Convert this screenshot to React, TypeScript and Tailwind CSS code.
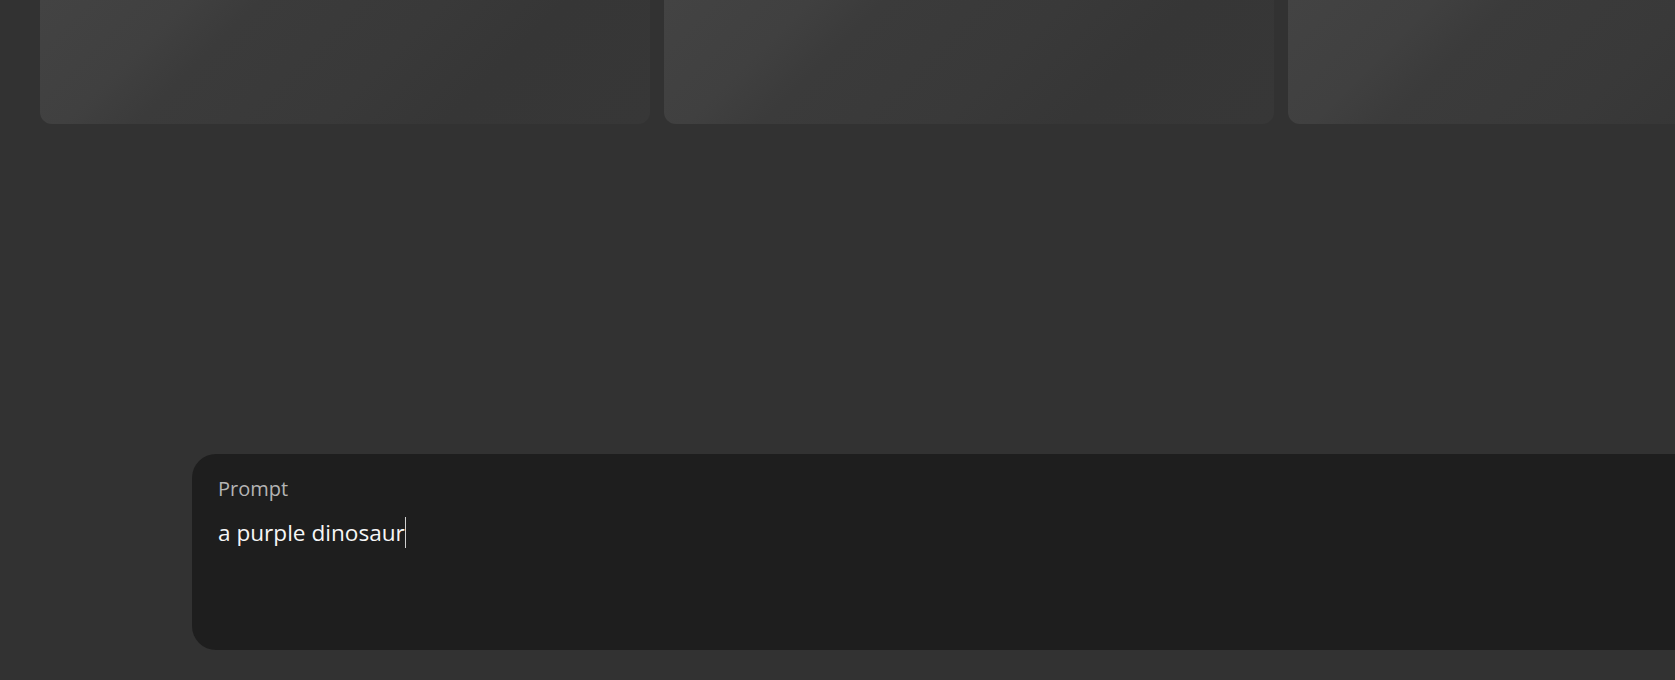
const cards = [0, 1, 2]

function ResultCard() {
  return (
    <div className="h-[124px] w-[610px] shrink-0 rounded-b-[12px] bg-[linear-gradient(135deg,#434343_0%,#404040_20%,#3b3b3b_30%,#393939_55%,#363636_72%,#373737_100%)]" />
  )
}

export default function App() {
  return (
    <div
      className="flex h-[680px] w-full flex-col overflow-hidden bg-[#323232]"
      style={{ fontFamily: '"Open Sans", "Noto Sans", sans-serif' }}
    >
      <div className="flex gap-[14px] pl-[40px]">
        {cards.map(i => (
          <ResultCard key={i} />
        ))}
      </div>

      <div className="mt-[330px] ml-[192px] h-[196px] w-[1600px] shrink-0 rounded-[24px] bg-[#1e1e1e] pl-[26px] pt-[21px]">
        <div className="text-[20px] leading-[27px] text-[#b4b4b4]">Prompt</div>
        <div className="mt-[15px] text-[22.6px] leading-[31px] text-[#f6f6f6]">
          a purple dinosaur
          <span className="inline-block h-[31px] w-[1.5px] bg-[#d0d0d0] align-top" />
        </div>
      </div>
    </div>
  )
}
